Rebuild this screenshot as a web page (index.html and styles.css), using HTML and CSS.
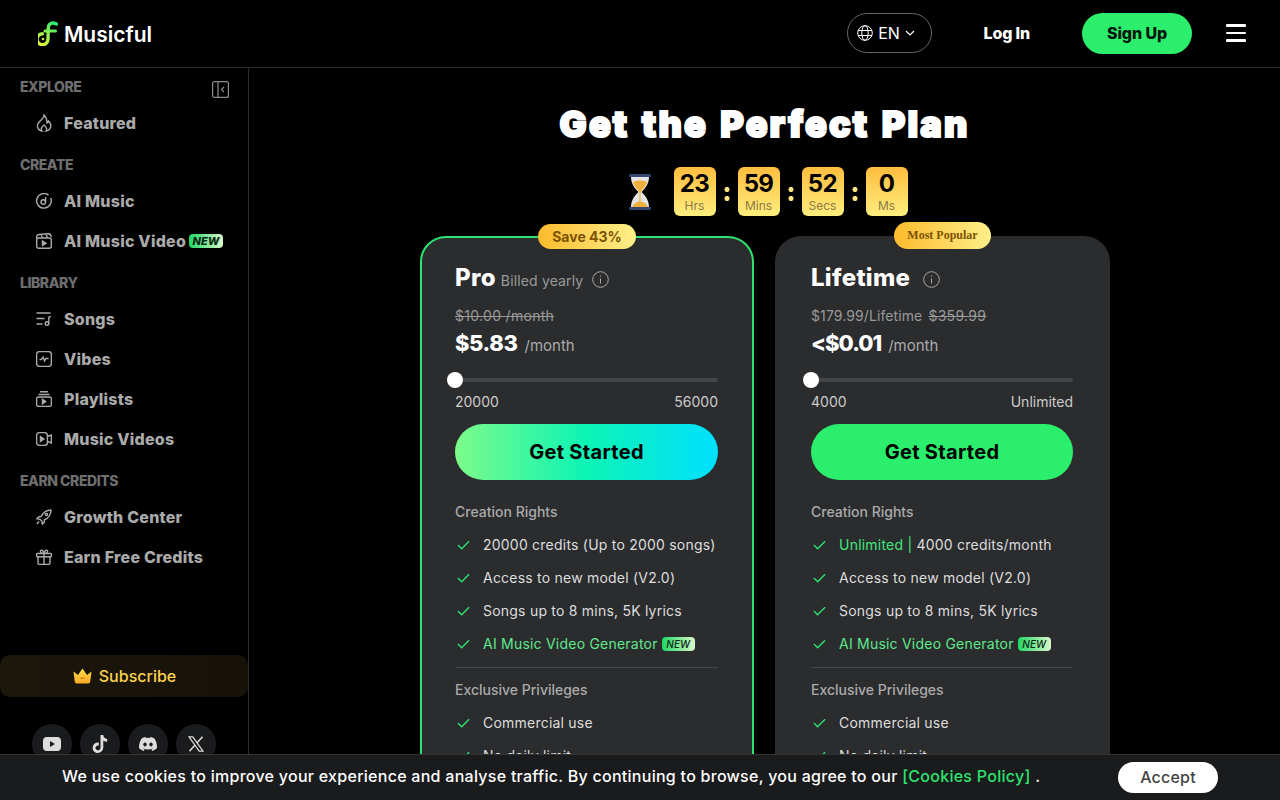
FILE: index.html
```html
<!DOCTYPE html>
<html lang="en">
<head>
<meta charset="utf-8">
<title>Musicful</title>
<link rel="stylesheet" href="styles.css">
</head>
<body>
<svg class="defs" width="0" height="0" aria-hidden="true">
  <defs>
    <linearGradient id="logoGrad" gradientUnits="userSpaceOnUse" x1="2" y1="24" x2="18" y2="1"><stop offset="0" stop-color="#e4f53a"/><stop offset=".5" stop-color="#8cf04e"/><stop offset="1" stop-color="#22e878"/></linearGradient>
    <linearGradient id="crownGrad" x1="0" y1="0" x2="0" y2="1"><stop offset="0" stop-color="#ffe04a"/><stop offset="1" stop-color="#f9a825"/></linearGradient>
  </defs>
</svg>
<header class="topbar">
  <a class="brand">
    <svg class="logo" viewBox="0 0 20 25" width="20" height="25"><path d="M18.500 3C14 .8 10.500 2.500 10.300 7l-.3 11a5.500 5.500 0 1 1-5.500-5.300" fill="none" stroke="url(#logoGrad)" stroke-width="3.400" stroke-linecap="round"/><path d="M7 10h10.500" fill="none" stroke="url(#logoGrad)" stroke-width="3" stroke-linecap="round"/><circle cx="5" cy="18" r="1.300" fill="#c9f23f"/></svg>
    <span>Musicful</span>
  </a>
  <div class="top-actions">
    <button class="lang">
      <svg viewBox="0 0 16 16" width="16" height="16" fill="none" stroke="#fff" stroke-width="1"><circle cx="8" cy="8" r="7.300"/><ellipse cx="8" cy="8" rx="3.200" ry="7.300"/><path d="M1 5.500h14M1 10.500h14"/></svg>
      <span>EN</span>
      <svg viewBox="0 0 10 6" width="10" height="6" fill="none" stroke="#fff" stroke-width="1.200"><path d="M1 1l4 4 4-4"/></svg>
    </button>
    <a class="login">Log In</a>
    <button class="signup">Sign Up</button>
    <button class="menu" aria-label="Menu"><i></i><i></i><i></i></button>
  </div>
</header>
<div class="shell">
  <aside class="sidebar">
    <nav class="nav">
      <div class="nav-label nav-label-first"><span>EXPLORE</span>
        <svg class="collapse" viewBox="0 0 17 17" width="17" height="17" fill="none" stroke="#8c8c8c" stroke-width="1.200"><rect x=".6" y=".6" width="15.800" height="15.800" rx="2"/><path d="M6 .6v15.800M12 6l-2.500 2.500 2.500 2.500"/></svg>
      </div>
      <a class="nav-item"><svg viewBox="0 0 16 18" width="16" height="18" fill="none" stroke="#aaa"><path d="M8 1c.3 3-4 5.500-6 8.500C.5 12.500 2.500 17 6 17c-1-1-1.500-3 2-6 3 2.500 3.200 5 2 6 3.500 0 5.500-4 4.500-7-.4-1.300-1.200-2.300-2-3-.2 1-.7 1.700-1.500 2C11 6 10 3 8 1z"/></svg><span>Featured</span></a>
      <div class="nav-label">CREATE</div>
      <a class="nav-item"><svg viewBox="0 0 16 16" width="16" height="16" fill="none" stroke="#aaa"><path d="M12.500 2.100A7.300 7.300 0 1 0 14.700 5"/><circle cx="7.300" cy="9" r="2.300"/><path d="M9.600 9V4"/></svg><span>AI Music</span></a>
      <a class="nav-item"><svg viewBox="0 0 16 16" width="16" height="16" fill="none" stroke="#aaa"><rect x=".7" y="5" width="14.600" height="10.300" rx="2"/><path d="M.8 5.500L.7 4A2.500 2.500 0 0 1 3 1.500L12 .7c2-.1 3 1 3.200 3.300M5 1.500l1.500 3.300M10 1l1.500 3.700"/><path d="M6.500 8l3.500 2.200-3.500 2.200z" fill="#aaa"/></svg><span>AI Music Video</span><b class="new new-nav">NEW</b></a>
      <div class="nav-label">LIBRARY</div>
      <a class="nav-item"><svg viewBox="0 0 16 14" width="16" height="14" fill="none" stroke="#aaa"><path d="M.5 1h14M.5 6.500h8M.5 12h6"/><circle cx="11" cy="11.500" r="1.800"/><path d="M12.800 11.500V6c0-1 1-1.500 2-1.500"/></svg><span>Songs</span></a>
      <a class="nav-item"><svg viewBox="0 0 16 16" width="16" height="16" fill="none" stroke="#aaa"><rect x=".6" y=".6" width="14.800" height="14.800" rx="3"/><path d="M3.500 8.500h2L7 6l1.500 4 1.300-2.500h2.700"/></svg><span>Vibes</span></a>
      <a class="nav-item"><svg viewBox="0 0 16 16" width="16" height="16" fill="none" stroke="#aaa"><path d="M4 .8h8M2.500 3.500h11"/><rect x=".6" y="6" width="14.800" height="9.400" rx="2"/><path d="M6.500 8.300l3.200 2.300-3.200 2.300z" fill="#aaa"/></svg><span>Playlists</span></a>
      <a class="nav-item"><svg viewBox="0 0 16 14" width="16" height="14" fill="none" stroke="#aaa"><rect x=".6" y=".6" width="10.800" height="12.800" rx="3"/><path d="M11.500 4.500l3.900-1.500v8l-3.900-1.500"/><path d="M4.500 4.500l3.500 2.500-3.500 2.500z" fill="#aaa"/></svg><span>Music Videos</span></a>
      <div class="nav-label">EARN CREDITS</div>
      <a class="nav-item"><svg viewBox="0 0 16 16" width="16" height="16" fill="none" stroke="#aaa"><path d="M15 1c-4.500 0-7.500 2-10 6.500L3 7.700.9 9.700l3.100.6 1.800 1.800.6 3 2-2.100-.2-2C12.800 9 15 5.500 15 1z"/><circle cx="10.500" cy="5.500" r="1.100"/><path d="M3 12.500L1 15"/></svg><span>Growth Center</span></a>
      <a class="nav-item"><svg viewBox="0 0 16 16" width="16" height="16" fill="none" stroke="#aaa"><rect x=".6" y="4.500" width="14.800" height="3.300" rx=".8"/><path d="M2 7.800v6.200c0 .8.600 1.400 1.400 1.400h9.200c.8 0 1.400-.6 1.400-1.400V7.800M8 4.500v10.900M8 4.500C6 4.500 4 3.500 4.500 2S7.500 1 8 4.500zM8 4.500c2 0 4-1 3.500-2.500S8.500 1 8 4.500z"/></svg><span>Earn Free Credits</span></a>
    </nav>
    <div class="side-foot">
      <a class="subscribe">
        <svg viewBox="0 0 20 16" width="21" height="16"><path d="M1 3.500l4.500 3.500L10 .5l4.500 6.500L19 3.500l-1.300 10.300a2 2 0 0 1-2 1.700H4.300a2 2 0 0 1-2-1.700z" fill="url(#crownGrad)"/><rect x="7.500" y="9.500" width="5" height="1.500" rx=".7" fill="#d98a16"/></svg>
        <span>Subscribe</span>
      </a>
      <div class="socials">
        <a class="social"><svg viewBox="0 0 18 14" width="18" height="14"><rect width="18" height="14" rx="4" fill="#ddd"/><path d="M7 4l5 3-5 3z" fill="#1a1b1d"/></svg></a>
        <a class="social"><svg viewBox="0 0 16 18" width="16" height="18"><path d="M8.500 0h2.800c.2 2.200 1.600 3.700 3.900 3.900v2.800c-1.500 0-2.800-.5-3.900-1.300v6.900c0 3.200-2.500 5.700-5.600 5.700S.2 15.500.7 12c.4-2.800 3.100-5 6.100-4.500v3c-1.700-.4-3.300.7-3.300 2.300 0 1.500 1.100 2.500 2.500 2.500s2.500-1.100 2.500-2.600z" fill="#ddd"/></svg></a>
        <a class="social"><svg viewBox="0 0 18 14" width="18" height="14"><path d="M15.200 1.200A15 15 0 0 0 11.500 0l-.5 1a14 14 0 0 0-4 0L6.500 0A15 15 0 0 0 2.800 1.200C.5 4.700-.2 8 .1 11.300A15 15 0 0 0 4.700 14l1-1.500-1.600-.8.4-.3c3 1.400 6.100 1.400 9 0l.4.300-1.600.8 1 1.500a15 15 0 0 0 4.600-2.700c.4-3.800-.6-7.100-2.700-10.100z" fill="#ddd"/><ellipse cx="6" cy="7.500" rx="1.700" ry="1.900" fill="#1a1b1d"/><ellipse cx="12" cy="7.500" rx="1.700" ry="1.900" fill="#1a1b1d"/></svg></a>
        <a class="social"><svg viewBox="0 0 16 16" width="16" height="16" fill="none" stroke="#ddd" stroke-width="1.200"><path d="M1 .8h3.800l10.200 14.400h-3.800z"/><path d="M14.500.8L8.900 7M7 9L1.500 15.200" stroke-width="1.500"/></svg></a>
      </div>
    </div>
  </aside>
  <main class="content">
    <h1 class="title">Get the Perfect Plan</h1>
    <div class="timer">
      <svg class="hourglass" viewBox="0 0 26 36" width="26" height="36"><path d="M4 3h18c0 6-3 11-7.500 15C19 22 22 27 22 33H4c0-6 3-11 7.500-15C7 14 4 9 4 3z" fill="#e4e6e6"/><path d="M6 8c4-2 10-2 14 0-1 4-4 7-6.500 10h-1C10 15 7 12 6 8z" fill="#eeb03a"/><path d="M12.500 18h1l.2 10h-1.400z" fill="#eeb03a"/><path d="M5 33c1.500-3.500 5-5.500 8-5.500s6.500 2 8 5.500z" fill="#eeb03a"/><rect x="2" y="0" width="22" height="3" rx="1.200" fill="#33476e"/><rect x="2" y="33" width="22" height="3" rx="1.200" fill="#33476e"/></svg>
      <div class="tick"><strong>23</strong><small>Hrs</small></div><i class="colon"></i>
      <div class="tick"><strong>59</strong><small>Mins</small></div><i class="colon"></i>
      <div class="tick"><strong>52</strong><small>Secs</small></div><i class="colon"></i>
      <div class="tick"><strong>0</strong><small>Ms</small></div>
    </div>
    <div class="plans">
      <section class="plan plan-pro">
        <span class="badge badge-save">Save 43%</span>
        <div class="plan-head"><h2>Pro</h2><span class="billed">Billed yearly</span>
          <svg class="info" viewBox="0 0 17 17" width="17" height="17" fill="none" stroke="#aaa"><circle cx="8.500" cy="8.500" r="7.800"/><path d="M8.500 7.500v5M8.500 4.500v1.200"/></svg></div>
        <div class="old"><s>$10.00 /month</s></div>
        <div class="price"><strong>$5.83</strong><span>/month</span></div>
        <div class="slider"><i class="thumb"></i></div>
        <div class="range"><span>20000</span><span>56000</span></div>
        <button class="cta cta-grad">Get Started</button>
        <h3>Creation Rights</h3>
        <ul class="feats">
          <li><svg class="chk" viewBox="0 0 14 10"><path d="M1 5l4 4 8-8"/></svg>20000 credits (Up to 2000 songs)</li>
          <li><svg class="chk" viewBox="0 0 14 10"><path d="M1 5l4 4 8-8"/></svg>Access to new model (V2.0)</li>
          <li><svg class="chk" viewBox="0 0 14 10"><path d="M1 5l4 4 8-8"/></svg>Songs up to 8 mins, 5K lyrics</li>
          <li class="hl"><svg class="chk" viewBox="0 0 14 10"><path d="M1 5l4 4 8-8"/></svg>AI Music Video Generator<b class="new new-feat">NEW</b></li>
        </ul>
        <hr class="rule">
        <h3>Exclusive Privileges</h3>
        <ul class="feats">
          <li><svg class="chk" viewBox="0 0 14 10"><path d="M1 5l4 4 8-8"/></svg>Commercial use</li>
          <li><svg class="chk" viewBox="0 0 14 10"><path d="M1 5l4 4 8-8"/></svg>No daily limit</li>
        </ul>
      </section>
      <section class="plan">
        <span class="badge badge-pop">Most Popular</span>
        <div class="plan-head"><h2>Lifetime</h2>
          <svg class="info info-wide" viewBox="0 0 17 17" width="17" height="17" fill="none" stroke="#aaa"><circle cx="8.500" cy="8.500" r="7.800"/><path d="M8.500 7.500v5M8.500 4.500v1.200"/></svg></div>
        <div class="old"><span>$179.99/Lifetime</span><s>$359.99</s></div>
        <div class="price price-tight"><strong>&lt;$0.01</strong><span>/month</span></div>
        <div class="slider"><i class="thumb"></i></div>
        <div class="range"><span>4000</span><span>Unlimited</span></div>
        <button class="cta">Get Started</button>
        <h3>Creation Rights</h3>
        <ul class="feats">
          <li><svg class="chk" viewBox="0 0 14 10"><path d="M1 5l4 4 8-8"/></svg><em>Unlimited |</em>&nbsp;4000 credits/month</li>
          <li><svg class="chk" viewBox="0 0 14 10"><path d="M1 5l4 4 8-8"/></svg>Access to new model (V2.0)</li>
          <li><svg class="chk" viewBox="0 0 14 10"><path d="M1 5l4 4 8-8"/></svg>Songs up to 8 mins, 5K lyrics</li>
          <li class="hl"><svg class="chk" viewBox="0 0 14 10"><path d="M1 5l4 4 8-8"/></svg>AI Music Video Generator<b class="new new-feat">NEW</b></li>
        </ul>
        <hr class="rule">
        <h3>Exclusive Privileges</h3>
        <ul class="feats">
          <li><svg class="chk" viewBox="0 0 14 10"><path d="M1 5l4 4 8-8"/></svg>Commercial use</li>
          <li><svg class="chk" viewBox="0 0 14 10"><path d="M1 5l4 4 8-8"/></svg>No daily limit</li>
        </ul>
      </section>
    </div>
  </main>
</div>
<div class="cookie">
  <p>We use cookies to improve your experience and analyse traffic. By continuing to browse, you agree to our <a>[Cookies Policy]</a> .</p>
  <button class="accept">Accept</button>
</div>
</body>
</html>
```
FILE: styles.css
```css
* { box-sizing: border-box; }
html, body { margin: 0; height: 100%; overflow: hidden; background: #000; }
body { font-family: Inter, "Open Sans", sans-serif; color: #fff; display: flex; flex-direction: column; height: 800px; }
.defs { position: absolute; }
button { font-family: inherit; border: 0; cursor: pointer; padding: 0; }
h1, h2, h3, p, ul { margin: 0; padding: 0; }
ul { list-style: none; }

.topbar { height: 68px; flex: none; display: flex; align-items: center; justify-content: space-between; border-bottom: 1px solid #2c2c2c; padding: 0 34px 1px 38px; }
.brand { display: flex; align-items: center; gap: 6px; font-size: 21px; font-weight: 600; }
.brand span { margin-top: 2px; }
.top-actions { display: flex; align-items: center; }
.lang { width: 85px; height: 40px; border: 1px solid #666; border-radius: 20px; background: none; color: #fff; font-size: 16px; display: flex; align-items: center; justify-content: center; gap: 5px; padding: 0 8px 0 0; }
.login { font-size: 16px; font-weight: 800; margin-left: 51px; letter-spacing: -.15px; }
.signup { width: 110px; height: 41px; border-radius: 21px; background: #2bee6c; color: #06150b; font-size: 16px; font-weight: 800; margin-left: 52px; letter-spacing: -.1px; }
.menu { width: 20px; background: none; margin-left: 34px; display: flex; flex-direction: column; gap: 5px; }
.menu i { display: block; height: 2.500px; background: #fff; border-radius: 1px; }

.shell { flex: 1; min-height: 0; display: flex; }
.sidebar { width: 249px; flex: none; border-right: 1px solid #2c2c2c; display: flex; flex-direction: column; padding-top: 3px; height: 732px; }
.nav { flex: 1; }
.nav-label { height: 32px; margin-top: 6px; padding: 0 19px 1px 20px; display: flex; align-items: center; justify-content: space-between; font-size: 14px; font-weight: 800; color: #6e6e6e; letter-spacing: -.45px; }
.nav-label-first { margin-top: 0; }
.collapse { margin-top: 5px; }
.nav-item { height: 40px; display: flex; align-items: center; padding-left: 36px; font-size: 16px; font-weight: 800; color: #aaa; letter-spacing: .22px; }
.nav-item svg { width: 16px; margin-right: 12px; flex: none; stroke-width: 1.400; }
.new { display: inline-block; font-style: italic; font-weight: 800; color: #0b2a14; background: linear-gradient(90deg, #22d765, #d8f8c8); border-radius: 4px; text-align: center; letter-spacing: 0; }
.new-nav { font-size: 11px; line-height: 14px; width: 34px; margin-left: 3px; }
.new-feat { font-size: 10px; font-weight: 500; line-height: 14px; width: 33px; margin-left: 4px; }

.side-foot { flex: none; padding-bottom: 36px; }
.subscribe { height: 42px; margin-right: 0; border-radius: 10px; background: linear-gradient(90deg, #1c170b, #161209); display: flex; align-items: center; justify-content: center; gap: 6px; color: #fdd34d; font-size: 16px; font-weight: 500; }
.socials { display: flex; gap: 8px; padding: 27px 0 0 32px; }
.social { width: 40px; height: 40px; border-radius: 50%; background: #1a1b1d; display: flex; align-items: center; justify-content: center; }

.content { flex: 1; min-width: 0; display: flex; flex-direction: column; align-items: center; padding-top: 36px; overflow: hidden; }
.title { font-size: 36px; line-height: 40px; font-weight: 900; -webkit-text-stroke: 2px #fff; letter-spacing: 2.150px; word-spacing: 3px; }
.timer { display: flex; align-items: center; margin-top: 23px; height: 49px; margin-left: 5px; }
.hourglass { margin-right: 21px; }
.tick { width: 42px; height: 49px; border-radius: 6px; background: linear-gradient(180deg, #ffbd3e, #ffee7e); color: #000; text-align: center; display: flex; flex-direction: column; align-items: center; padding-top: 2px; }
.tick strong { font-size: 24px; line-height: 30px; font-weight: 700; letter-spacing: -.6px; }
.tick small { font-size: 12px; line-height: 14px; color: #8c7a45; }
.colon { width: 22px; height: 14px; margin-top: 4px; position: relative; background: radial-gradient(circle at 50% 2.500px, #ffe680 2.300px, transparent 2.800px), radial-gradient(circle at 50% 11.500px, #ffe680 2.300px, transparent 2.800px); }

.plans { display: grid; grid-template-columns: 334px 335px; gap: 21px; margin: 20px 0 0 1px; }
.plan { position: relative; background: #2b2c2e; border-radius: 26px; padding: 28px 37px 40px 36px; height: 800px; }
.plan-pro { border: 2px solid #2ce36f; padding: 26px 34px 40px 33px; }
.badge { position: absolute; border-radius: 14px; background: linear-gradient(90deg, #fdbb2d, #fff08a); color: #7a5200; text-align: center; }
.badge-save { top: -14px; left: 116px; width: 98px; height: 25px; line-height: 25px; font-size: 14px; font-weight: 700; }
.badge-pop { top: -14px; left: 119px; width: 97px; height: 27px; line-height: 27px; font-family: "Liberation Serif", serif; font-size: 12px; font-weight: 700; }
.plan-head { display: flex; align-items: center; height: 27px; }
.plan-head h2 { font-size: 24px; line-height: 27px; font-weight: 800; letter-spacing: .3px; }
.billed { font-size: 14px; color: #9a9a9a; margin: 5px 0 0 5px; letter-spacing: .15px; }
.info { margin: 4px 0 0 9px; }
.info-wide { margin-left: 13px; }
.old { margin-top: 15px; height: 20px; line-height: 20px; font-size: 14px; color: #999; display: flex; gap: 6px; letter-spacing: .3px; }
.old span { letter-spacing: .1px; }
.price { display: flex; align-items: center; gap: 7px; height: 28px; margin-top: 3px; }
.price strong { font-size: 22px; line-height: 28px; font-weight: 800; letter-spacing: -.4px; }
.price-tight strong { letter-spacing: -1px; }
.price span { font-size: 15px; color: #aaa; margin-top: 4px; }
.slider { position: relative; height: 4px; background: #444547; border-radius: 2px; margin-top: 21px; }
.thumb { position: absolute; left: -8px; top: -6px; width: 16px; height: 16px; background: #fff; border-radius: 50%; }
.range { display: flex; justify-content: space-between; margin-top: 10px; height: 20px; line-height: 20px; font-size: 14px; color: #ccc; }
.cta { display: block; width: 100%; height: 56px; margin-top: 12px; border-radius: 28px; background: #2bee6c; color: #000; font-size: 20px; font-weight: 700; letter-spacing: .3px; }
.cta-grad { background: linear-gradient(90deg, #7dfb8a, #0cf4b4 50%, #00e0ff); }
.plan h3 { font-size: 14px; font-weight: 500; color: #aaa; line-height: 20px; }
.cta + h3 { margin-top: 22px; }
.feats { margin-top: 6px; }
.feats li { height: 33px; display: flex; align-items: center; font-size: 14px; color: #ddd; letter-spacing: .22px; }
.feats li.hl { color: #5fe88a; }
.feats em { font-style: normal; color: #3fe87c; }
.chk { width: 13px; height: 10px; margin: 0 13px 0 2px; flex: none; fill: none; stroke: #2ce36f; stroke-width: 1.500; }
.rule { border: 0; border-top: 1px solid #444547; margin: 7px 0 12px; }

.cookie { position: fixed; left: 0; right: 0; bottom: 0; height: 46px; background: #1a1b1d; border-top: 1px solid #333; display: flex; align-items: center; padding: 0 62px; justify-content: space-between; }
.cookie p { font-size: 16px; font-weight: 500; letter-spacing: .27px; padding-bottom: 3px; }
.cookie a { color: #2ce36f; }
.accept { width: 100px; height: 31px; border-radius: 16px; background: #fff; color: #444; font-size: 16px; font-weight: 500; letter-spacing: .2px; padding-bottom: 1px; }
```
